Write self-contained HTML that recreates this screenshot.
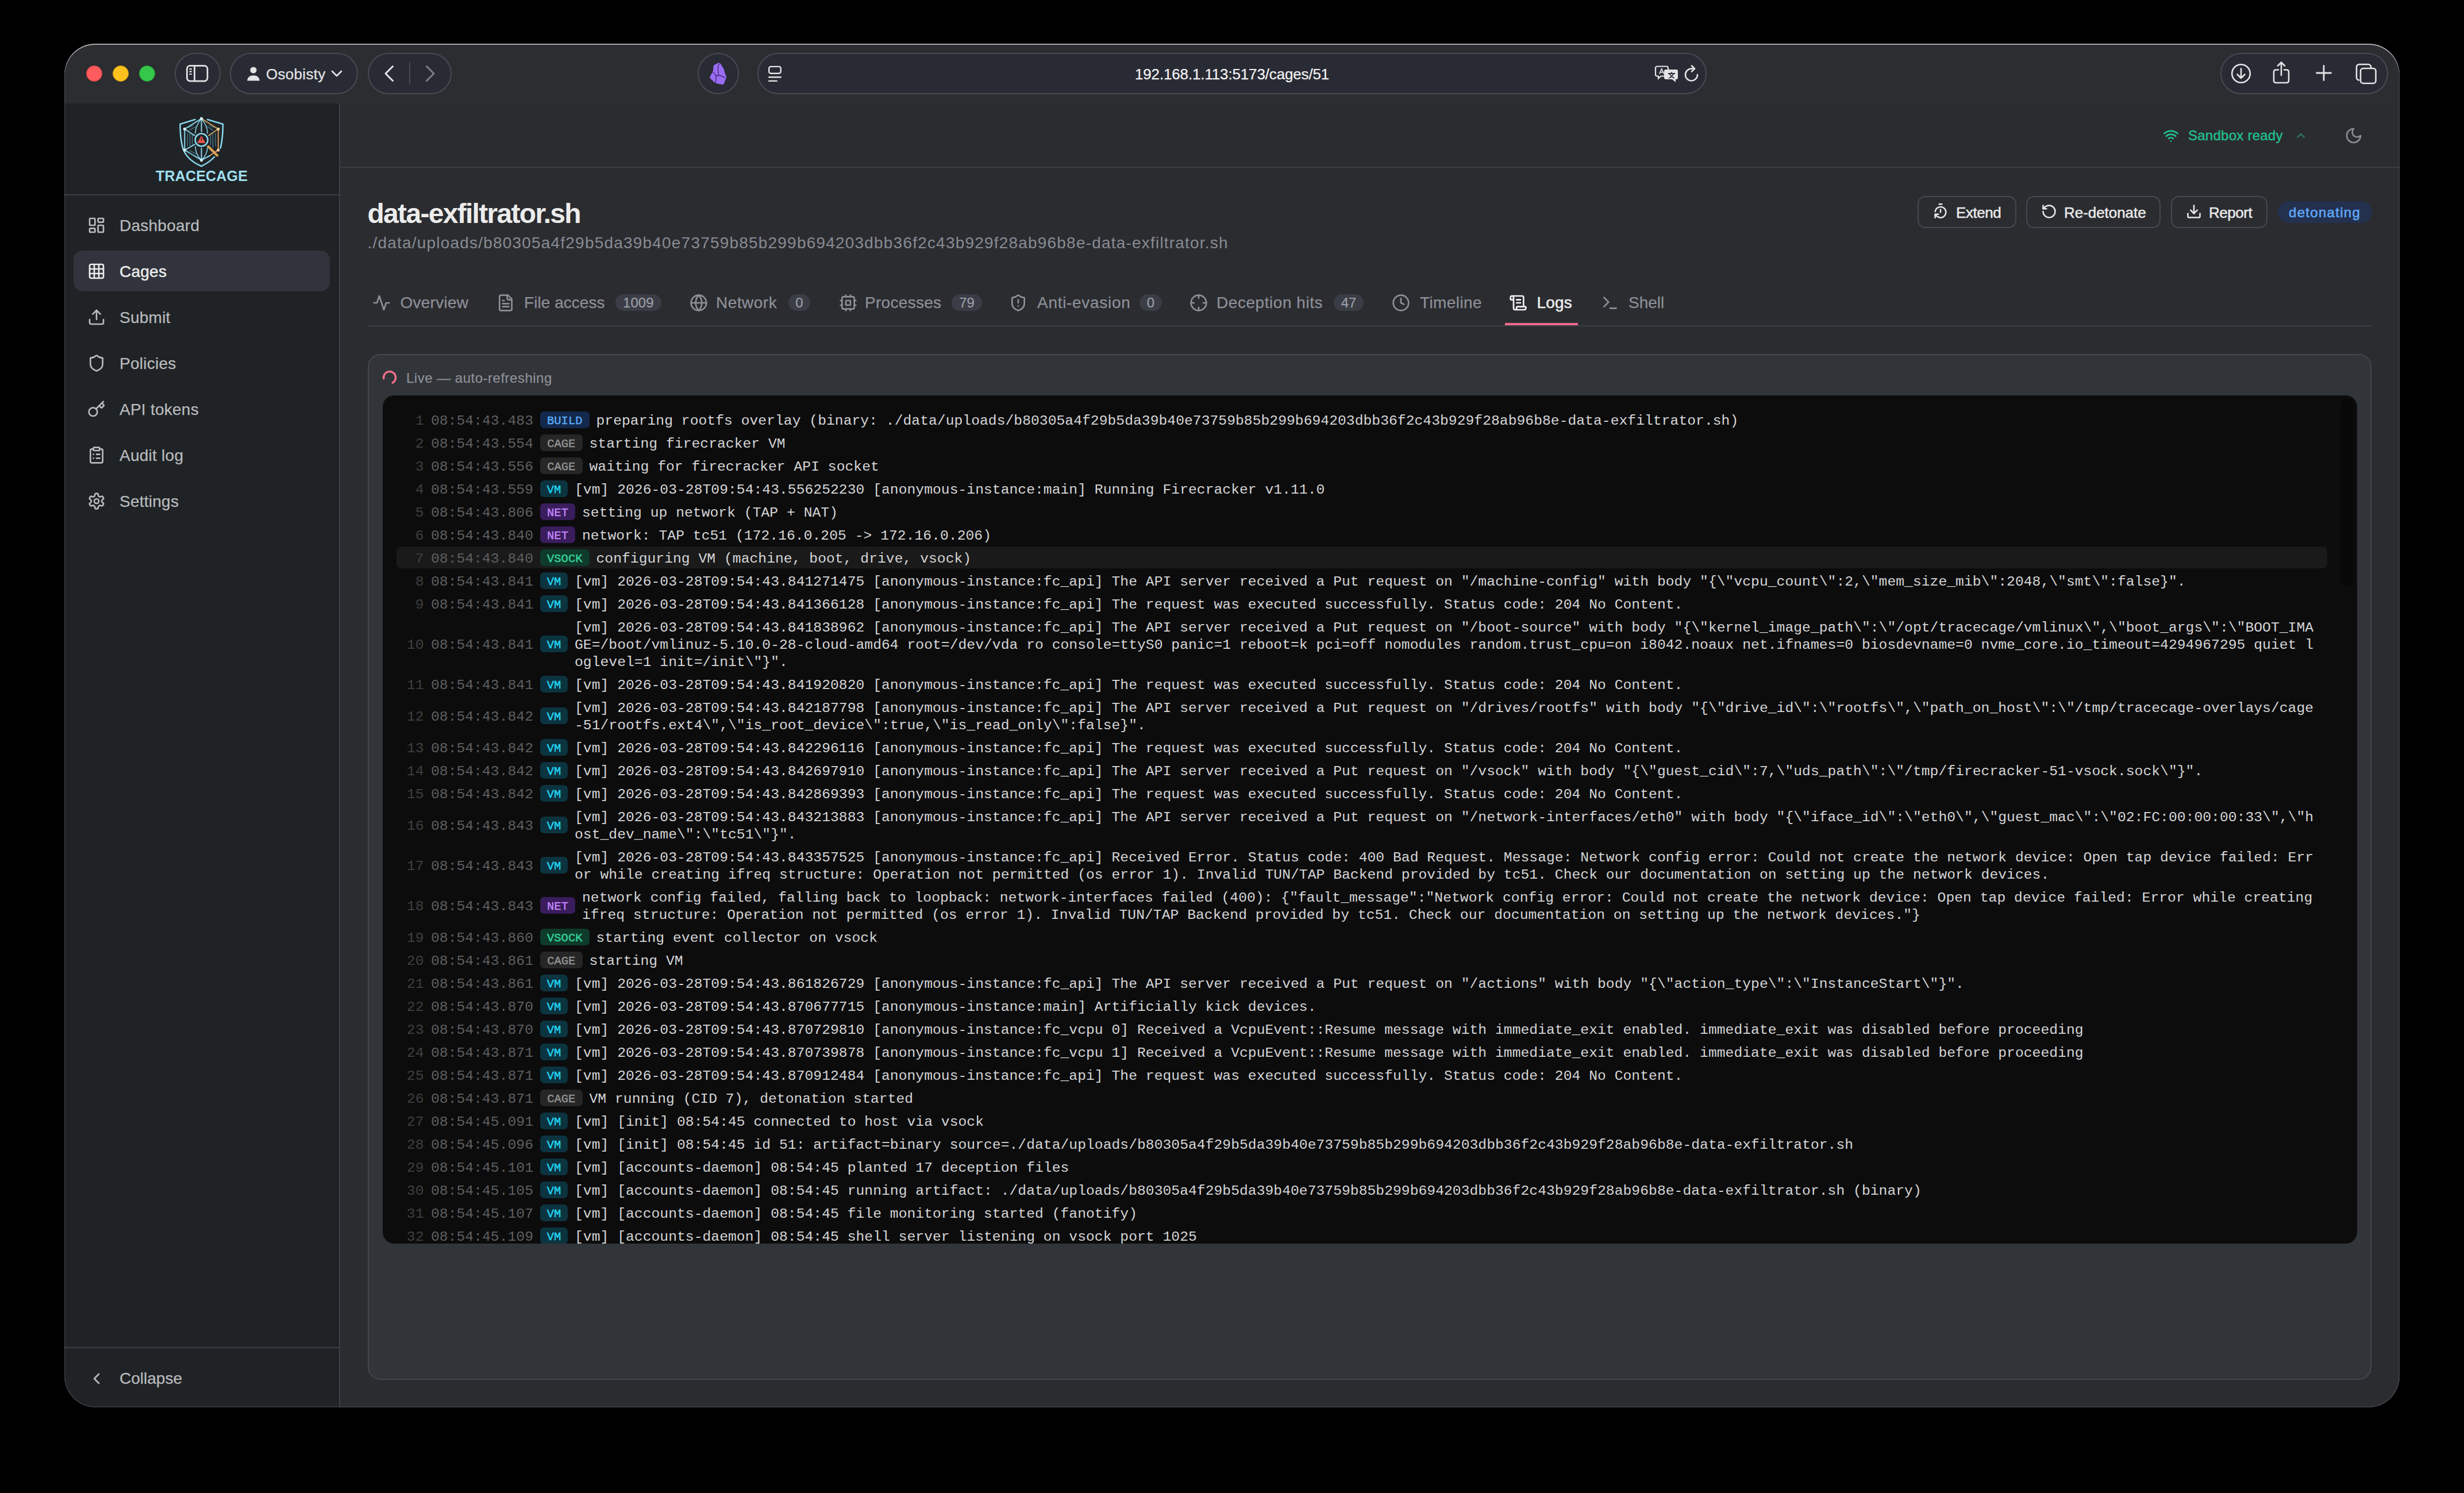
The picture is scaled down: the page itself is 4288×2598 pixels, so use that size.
<!DOCTYPE html><html><head><meta charset="utf-8"><style>
html,body{margin:0;padding:0;background:#000;width:4288px;height:2598px;overflow:hidden}
.t{position:absolute;white-space:pre;font-family:'Liberation Sans', sans-serif}
.b{position:absolute;box-sizing:border-box}
.i{position:absolute;overflow:visible}
#win{position:absolute;left:112px;top:76px;width:4064px;height:2373px;border-radius:54px;overflow:hidden;background:#2c2d30}
</style></head><body>
<div id="clip" style="position:absolute;left:0;top:0;width:4288px;height:2598px;clip-path:inset(76px 112px 149px 112px round 54px)">
<div id="win"></div>
<div class="b" style="left:112.0px;top:180.0px;width:478.0px;height:2269.0px;background:#202326"></div>
<div class="b" style="left:590.0px;top:180.0px;width:2.0px;height:2269.0px;background:#3b3e44"></div>
<div class="b" style="left:592.0px;top:180.0px;width:3584.0px;height:2269.0px;background:#2b2c30"></div>
<div class="b" style="left:149.7px;top:114.0px;width:28.0px;height:28.0px;background:#fe5b5e;border-radius:50%;border:1px solid #d9434a"></div>
<div class="b" style="left:196.0px;top:114.0px;width:28.0px;height:28.0px;background:#fcc11d;border-radius:50%;border:1px solid #d9a10f"></div>
<div class="b" style="left:241.7px;top:114.0px;width:28.0px;height:28.0px;background:#34c749;border-radius:50%;border:1px solid #23a336"></div>
<div class="b" style="left:304.0px;top:92.0px;width:80.0px;height:71.5px;background:#292b34;border:2px solid #474a54;border-radius:40px"></div>
<div class="b" style="left:400.0px;top:92.0px;width:223.0px;height:71.5px;background:#292b34;border:2px solid #474a54;border-radius:40px"></div>
<div class="b" style="left:640.0px;top:92.0px;width:146.0px;height:71.5px;background:#292b34;border:2px solid #474a54;border-radius:40px"></div>
<div class="b" style="left:1214.0px;top:92.0px;width:72.0px;height:71.5px;background:#292b34;border:2px solid #474a54;border-radius:40px"></div>
<div class="b" style="left:1318.0px;top:92.0px;width:1652.0px;height:71.5px;background:#292b34;border:2px solid #474a54;border-radius:40px"></div>
<div class="b" style="left:3864.0px;top:92.0px;width:292.0px;height:71.5px;background:#292b34;border:2px solid #474a54;border-radius:40px"></div>
<svg class="i" style="left:318px;top:108px;width:50px;height:40px" viewBox="318 108 50 40" fill="none" stroke="#e4e4e6" stroke-width="2.8"><rect x="325.4" y="114.4" width="35.6" height="26.7" rx="5.5"/><path d="M338.5 114.4v26.7"/><path d="M329.5 120.2h4.3M329.5 124.6h4.3M329.5 129h4.3" stroke-width="2.2"/></svg>
<svg class="i" style="left:430px;top:116px;width:22px;height:25px" viewBox="0 0 22 25"><circle cx="11" cy="6" r="5.6" fill="#e4e4e6"/><path d="M0.3 24.5c0-6 4.5-9.3 10.7-9.3s10.7 3.3 10.7 9.3z" fill="#e4e4e6"/></svg>
<div class="t" style="left:463.0px;top:113.0px;font-size:26px;line-height:32px;color:#e4e4e6;font-weight:400;letter-spacing:0.3px;font-family:'Liberation Sans', sans-serif;-webkit-text-stroke:0.25px #e4e4e6;">Osobisty</div>
<svg class="i" style="left:576px;top:122px;width:20px;height:13px" viewBox="0 0 20 13" fill="none" stroke="#e4e4e6" stroke-width="2.6" stroke-linecap="round" stroke-linejoin="round"><path d="M2 2l8 8 8-8"/></svg>
<svg class="i" style="left:667px;top:112px;width:20px;height:32px" viewBox="0 0 20 32" fill="none" stroke="#e4e4e6" stroke-width="3" stroke-linecap="round" stroke-linejoin="round"><path d="M16.5 3.5L4 16l12.5 12.5"/></svg>
<div class="b" style="left:712.0px;top:108.0px;width:2.0px;height:39.0px;background:#474a52"></div>
<svg class="i" style="left:739px;top:112px;width:20px;height:32px" viewBox="0 0 20 32" fill="none" stroke="#7d8087" stroke-width="3" stroke-linecap="round" stroke-linejoin="round"><path d="M3.5 3.5L16 16L3.5 28.5"/></svg>
<svg class="i" style="left:1230px;top:105px;width:40px;height:45px" viewBox="1230 105 40 45"><path d="M1250.5 109.2 Q1252.5 108.8 1254 111 L1259.7 120.2 Q1260.5 122 1260.9 125 Q1261.5 129 1263.9 132.4 Q1264.5 134 1263.5 136 L1259.7 146 Q1258.5 147.6 1256 147 L1246.3 145.1 Q1244.5 144.6 1243.2 143.3 L1236 136.5 Q1235 135 1235.5 133.5 L1240.2 125 Q1241 123 1241.2 120 L1241.4 116.5 Q1241.8 114 1243.5 112.8 Z" fill="#9b6cf3"/><path d="M1252 110.5 Q1249 115 1249.5 121 Q1249.8 127 1250 131 Q1256 131.5 1261.5 135.5 M1240.5 125.5 Q1245 128.5 1246 133 Q1246.5 137 1245 144.5 M1246 133 Q1248 131 1250 131" stroke="#3b2670" stroke-width="1.3" fill="none"/></svg>
<svg class="i" style="left:1330px;top:110px;width:40px;height:40px" viewBox="1330 110 40 40" fill="none" stroke="#e4e4e6" stroke-width="2.4" stroke-linecap="round"><rect x="1338.2" y="115.9" width="20.6" height="11.8" rx="3.2"/><path d="M1338.2 134.3h20.6M1338.2 140.9h13.5"/></svg>
<div class="t" style="left:1975.0px;top:113.0px;font-size:26px;line-height:32px;color:#f2f2f3;font-weight:400;letter-spacing:-0.15px;font-family:'Liberation Sans', sans-serif;-webkit-text-stroke:0.25px #f2f2f3;">192.168.1.113:5173/cages/51</div>
<svg class="i" style="left:2880px;top:114px;width:41px;height:31px" viewBox="0 0 41 31"><path d="M4 1.5h16a3 3 0 0 1 3 3v11a3 3 0 0 1-3 3H10.5L6 22.5v-4H4a3 3 0 0 1-3-3v-11a3 3 0 0 1 3-3z" fill="none" stroke="#e4e4e6" stroke-width="2.2"/><path d="M7.8 14.7L11.7 5.5L15.7 14.7M9.2 11.6h5" stroke="#e4e4e6" stroke-width="1.7" fill="none" stroke-linejoin="round"/><path d="M19 7h18a3 3 0 0 1 3 3v11a3 3 0 0 1-3 3h-1v5l-6-5H19a3 3 0 0 1-3-3V10a3 3 0 0 1 3-3z" fill="#e4e4e6"/><path d="M23 14h12M29 11.5v2.5M25.5 14c1.5 4 4.5 6.5 8.5 8M32.5 14c-1.5 4-4.5 6.5-8.5 8" stroke="#2a2c35" stroke-width="1.8" fill="none"/></svg>
<svg class="i" style="left:2930px;top:112px;width:27px;height:32px" viewBox="0 0 27 32" fill="none" stroke="#e4e4e6" stroke-width="2.6" stroke-linecap="round" stroke-linejoin="round"><path d="M24 18a10.5 10.5 0 1 1-10.5-10.5h5"/><path d="M14 2.5l5 5-5 5"/></svg>
<svg class="i" style="left:3882px;top:110px;width:36px;height:36px" viewBox="0 0 36 36" fill="none" stroke="#e4e4e6" stroke-width="2.6" stroke-linecap="round" stroke-linejoin="round"><circle cx="18" cy="18" r="15.8"/><path d="M18 9.5v16M11.5 19.5l6.5 6.5 6.5-6.5"/></svg>
<svg class="i" style="left:3954px;top:106px;width:32px;height:41px" viewBox="0 0 32 41" fill="none" stroke="#e4e4e6" stroke-width="2.6" stroke-linecap="round" stroke-linejoin="round"><path d="M11 15.5H6.5a3.5 3.5 0 0 0-3.5 3.5v15.5a3.5 3.5 0 0 0 3.5 3.5h19a3.5 3.5 0 0 0 3.5-3.5V19a3.5 3.5 0 0 0-3.5-3.5H21"/><path d="M16 25V2.5M10 8.5l6-6 6 6"/></svg>
<svg class="i" style="left:4030px;top:113px;width:28px;height:28px" viewBox="0 0 28 28" fill="none" stroke="#e4e4e6" stroke-width="2.8" stroke-linecap="round"><path d="M14 1.5v25M1.5 14h25"/></svg>
<svg class="i" style="left:4099px;top:110px;width:38px;height:37px" viewBox="0 0 38 37" fill="none" stroke="#e4e4e6" stroke-width="2.6"><path d="M7 29.5h-.5a4.5 4.5 0 0 1-4.5-4.5V6.5A4.5 4.5 0 0 1 6.5 2h16A4.5 4.5 0 0 1 27 6.5V9"/><rect x="9" y="9" width="26.5" height="26" rx="4.5"/></svg>
<svg class="i" style="left:300px;top:195px;width:100px;height:105px" viewBox="300 195 100 105" fill="none" stroke-linecap="round" stroke-linejoin="round">
<path d="M339.4 208 L313.4 216.1 Q313.5 240 317.6 256 Q324 278 350.6 289.2" stroke="#86d4ea" stroke-width="2.6"/>
<path d="M361.2 208 L387.9 216.1 Q388 240 383.7 257.6 M373.1 273 Q365 282 350.6 289.2" stroke="#86d4ea" stroke-width="2.6"/>
<path d="M350.6 206.3 L321.4 224.5 L321.4 261.1 L350.6 278.7" stroke="#8ad6ec" stroke-width="2"/>
<path d="M350.6 206.3 L379.8 224.5 L379.8 261.1 L365 271" stroke="#cf9d5c" stroke-width="2"/>
<path d="M365 271 L350.6 278.7" stroke="#8ad6ec" stroke-width="2"/>
<path d="M350.6 206.3 V229 M350.6 258 V278.7 M321.4 224.5 L338.7 235.8 M321.4 261.1 L338.7 251.3" stroke="#8ad6ec" stroke-width="2"/>
<path d="M379.8 224.5 L363 235.8" stroke="#cf9d5c" stroke-width="2"/>
<path d="M350.6 206.3 Q339.5 220 340 232 M350.6 206.3 Q361.5 220 361 232 M340 255 Q340 268 350.6 278.7 Q361 268 361 257" stroke="#86d0e6" stroke-width="1.6"/>
<path d="M326.5 232 V254 M330.5 229 V257 M334.5 234 V252 M366.5 234 V252 M370.5 229 V257 M375 232 V254" stroke="#4f8fa3" stroke-width="1.1"/>
<path d="M328 222 L336 218 M330 226 L342 220 M360 220 L370 226 M364 218 L373 222 M330 262 L342 268 M328 266 L336 270" stroke="#4f8fa3" stroke-width="1.1"/>
<circle cx="350.6" cy="243.5" r="11" stroke="#8ad6ec" stroke-width="2.6" fill="#1d2226"/>
<path d="M350.6 237.2 L357 248.4 H344.2Z" fill="#e8554f" stroke="#e8554f" stroke-width="1" />
<path d="M350.6 240.5 v4" stroke="#3a1515" stroke-width="1.3"/>
<path d="M362.5 255 L378 270.5" stroke="#d6a055" stroke-width="4.2"/>
<circle cx="350.6" cy="206.3" r="2.6" fill="#d6f3fb"/><circle cx="321.4" cy="224.5" r="2.6" fill="#d6f3fb"/><circle cx="321.4" cy="261.1" r="2.6" fill="#d6f3fb"/><circle cx="350.6" cy="278.7" r="2.6" fill="#d6f3fb"/><circle cx="379.8" cy="224.5" r="2.6" fill="#f3d2a2"/><circle cx="379.8" cy="261.1" r="2.6" fill="#f3d2a2"/>
</svg>
<div class="t" style="left:271.0px;top:290.8px;font-size:25px;line-height:31px;color:#9edff0;font-weight:700;letter-spacing:0.2px;font-family:'Liberation Sans', sans-serif;">TRACECAGE</div>
<div class="b" style="left:112.0px;top:338.0px;width:478.0px;height:2.0px;background:#3b3e44"></div>
<div class="b" style="left:128.0px;top:436.0px;width:445.5px;height:71.0px;background:#31343c;border-radius:16px"></div>
<svg class="i" style="left:151.5px;top:376.0px;width:32px;height:32px;" viewBox="0 0 24 24" fill="none" stroke="#b9bbbe" stroke-width="2" stroke-linecap="round" stroke-linejoin="round"><rect width="7" height="9" x="3" y="3" rx="1"/><rect width="7" height="5" x="14" y="3" rx="1"/><rect width="7" height="9" x="14" y="12" rx="1"/><rect width="7" height="5" x="3" y="16" rx="1"/></svg>
<div class="t" style="left:208.0px;top:374.8px;font-size:28px;line-height:35px;color:#b9bbbe;font-weight:400;letter-spacing:0.25px;font-family:'Liberation Sans', sans-serif;-webkit-text-stroke:0.25px #b9bbbe;">Dashboard</div>
<svg class="i" style="left:151.5px;top:456.0px;width:32px;height:32px;" viewBox="0 0 24 24" fill="none" stroke="#ececec" stroke-width="2" stroke-linecap="round" stroke-linejoin="round"><rect width="18" height="18" x="3" y="3" rx="2"/><path d="M3 9h18"/><path d="M3 15h18"/><path d="M9 3v18"/><path d="M15 3v18"/></svg>
<div class="t" style="left:208.0px;top:454.8px;font-size:28px;line-height:35px;color:#ececec;font-weight:400;letter-spacing:0.25px;font-family:'Liberation Sans', sans-serif;-webkit-text-stroke:0.5px #ececec">Cages</div>
<svg class="i" style="left:151.5px;top:536.0px;width:32px;height:32px;" viewBox="0 0 24 24" fill="none" stroke="#b9bbbe" stroke-width="2" stroke-linecap="round" stroke-linejoin="round"><path d="M21 15v4a2 2 0 0 1-2 2H5a2 2 0 0 1-2-2v-4"/><polyline points="17 8 12 3 7 8"/><line x1="12" x2="12" y1="3" y2="15"/></svg>
<div class="t" style="left:208.0px;top:534.8px;font-size:28px;line-height:35px;color:#b9bbbe;font-weight:400;letter-spacing:0.25px;font-family:'Liberation Sans', sans-serif;-webkit-text-stroke:0.25px #b9bbbe;">Submit</div>
<svg class="i" style="left:151.5px;top:616.0px;width:32px;height:32px;" viewBox="0 0 24 24" fill="none" stroke="#b9bbbe" stroke-width="2" stroke-linecap="round" stroke-linejoin="round"><path d="M20 13c0 5-3.5 7.5-7.66 8.95a1 1 0 0 1-.67-.01C7.5 20.5 4 18 4 13V6a1 1 0 0 1 1-1c2 0 4.5-1.2 6.24-2.72a1.17 1.17 0 0 1 1.52 0C14.51 3.81 17 5 19 5a1 1 0 0 1 1 1z"/></svg>
<div class="t" style="left:208.0px;top:614.8px;font-size:28px;line-height:35px;color:#b9bbbe;font-weight:400;letter-spacing:0.25px;font-family:'Liberation Sans', sans-serif;-webkit-text-stroke:0.25px #b9bbbe;">Policies</div>
<svg class="i" style="left:151.5px;top:696.0px;width:32px;height:32px;" viewBox="0 0 24 24" fill="none" stroke="#b9bbbe" stroke-width="2" stroke-linecap="round" stroke-linejoin="round"><path d="m15.5 7.5 2.3 2.3a1 1 0 0 0 1.4 0l2.1-2.1a1 1 0 0 0 0-1.4L19 4"/><path d="m21 2-9.6 9.6"/><circle cx="7.5" cy="15.5" r="5.5"/></svg>
<div class="t" style="left:208.0px;top:694.8px;font-size:28px;line-height:35px;color:#b9bbbe;font-weight:400;letter-spacing:0.25px;font-family:'Liberation Sans', sans-serif;-webkit-text-stroke:0.25px #b9bbbe;">API tokens</div>
<svg class="i" style="left:151.5px;top:776.0px;width:32px;height:32px;" viewBox="0 0 24 24" fill="none" stroke="#b9bbbe" stroke-width="2" stroke-linecap="round" stroke-linejoin="round"><rect width="8" height="4" x="8" y="2" rx="1" ry="1"/><path d="M16 4h2a2 2 0 0 1 2 2v14a2 2 0 0 1-2 2H6a2 2 0 0 1-2-2V6a2 2 0 0 1 2-2h2"/><path d="M12 11h4"/><path d="M12 16h4"/><path d="M8 11h.01"/><path d="M8 16h.01"/></svg>
<div class="t" style="left:208.0px;top:774.8px;font-size:28px;line-height:35px;color:#b9bbbe;font-weight:400;letter-spacing:0.25px;font-family:'Liberation Sans', sans-serif;-webkit-text-stroke:0.25px #b9bbbe;">Audit log</div>
<svg class="i" style="left:151.5px;top:856.0px;width:32px;height:32px;" viewBox="0 0 24 24" fill="none" stroke="#b9bbbe" stroke-width="2" stroke-linecap="round" stroke-linejoin="round"><path d="M12.22 2h-.44a2 2 0 0 0-2 2v.18a2 2 0 0 1-1 1.73l-.43.25a2 2 0 0 1-2 0l-.15-.08a2 2 0 0 0-2.73.73l-.22.38a2 2 0 0 0 .73 2.73l.15.1a2 2 0 0 1 1 1.72v.51a2 2 0 0 1-1 1.74l-.15.09a2 2 0 0 0-.73 2.73l.22.38a2 2 0 0 0 2.73.73l.15-.08a2 2 0 0 1 2 0l.43.25a2 2 0 0 1 1 1.73V20a2 2 0 0 0 2 2h.44a2 2 0 0 0 2-2v-.18a2 2 0 0 1 1-1.73l.43-.25a2 2 0 0 1 2 0l.15.08a2 2 0 0 0 2.73-.73l.22-.39a2 2 0 0 0-.73-2.73l-.15-.08a2 2 0 0 1-1-1.74v-.5a2 2 0 0 1 1-1.74l.15-.09a2 2 0 0 0 .73-2.73l-.22-.38a2 2 0 0 0-2.73-.73l-.15.08a2 2 0 0 1-2 0l-.43-.25a2 2 0 0 1-1-1.73V4a2 2 0 0 0-2-2z"/><circle cx="12" cy="12" r="3"/></svg>
<div class="t" style="left:208.0px;top:854.8px;font-size:28px;line-height:35px;color:#b9bbbe;font-weight:400;letter-spacing:0.25px;font-family:'Liberation Sans', sans-serif;-webkit-text-stroke:0.25px #b9bbbe;">Settings</div>
<div class="b" style="left:112.0px;top:2344.0px;width:478.0px;height:2.0px;background:#3b3e44"></div>
<svg class="i" style="left:152.0px;top:2383.0px;width:32px;height:32px;" viewBox="0 0 24 24" fill="none" stroke="#b9bbbe" stroke-width="2" stroke-linecap="round" stroke-linejoin="round"><path d="m15 18-6-6 6-6"/></svg>
<div class="t" style="left:208.0px;top:2380.8px;font-size:28px;line-height:35px;color:#b9bbbe;font-weight:400;letter-spacing:0px;font-family:'Liberation Sans', sans-serif;-webkit-text-stroke:0.25px #b9bbbe;">Collapse</div>
<div class="b" style="left:592.0px;top:290.0px;width:3584.0px;height:2.0px;background:#3b3e44"></div>
<svg class="i" style="left:3763.8px;top:222.0px;width:28px;height:28px;" viewBox="0 0 24 24" fill="none" stroke="#22c08a" stroke-width="2.3" stroke-linecap="round" stroke-linejoin="round"><path d="M12 20h.01"/><path d="M2 8.82a15 15 0 0 1 20 0"/><path d="M5 12.859a10 10 0 0 1 14 0"/><path d="M8.5 16.429a5 5 0 0 1 7 0"/></svg>
<div class="t" style="left:3808.0px;top:220.7px;font-size:24px;line-height:30px;color:#22c08a;font-weight:500;letter-spacing:0.25px;font-family:'Liberation Sans', sans-serif;-webkit-text-stroke:0.45px #22c08a">Sandbox ready</div>
<svg class="i" style="left:3992.0px;top:224.0px;width:24px;height:24px;" viewBox="0 0 24 24" fill="none" stroke="#2b8567" stroke-width="1.8" stroke-linecap="round" stroke-linejoin="round"><path d="m18 15-6-6-6 6"/></svg>
<svg class="i" style="left:4080.0px;top:220.0px;width:32px;height:32px;" viewBox="0 0 24 24" fill="none" stroke="#8a8d93" stroke-width="2" stroke-linecap="round" stroke-linejoin="round"><path d="M12 3a6 6 0 0 0 9 9 9 9 0 1 1-9-9Z"/></svg>
<div class="t" style="left:639.5px;top:342.4px;font-size:48px;line-height:60px;color:#ececec;font-weight:700;letter-spacing:-1.7px;font-family:'Liberation Sans', sans-serif;">data-exfiltrator.sh</div>
<div class="t" style="left:639.5px;top:404.8px;font-size:28px;line-height:35px;color:#888b93;font-weight:400;letter-spacing:1.2px;font-family:'Liberation Sans', sans-serif;-webkit-text-stroke:0px">./data/uploads/b80305a4f29b5da39b40e73759b85b299b694203dbb36f2c43b929f28ab96b8e-data-exfiltrator.sh</div>
<div class="b" style="left:3337.0px;top:340.5px;width:171.5px;height:56.5px;border:2px solid #45484f;border-radius:14px"></div>
<div class="b" style="left:3525.6px;top:340.5px;width:234.9px;height:56.5px;border:2px solid #45484f;border-radius:14px"></div>
<div class="b" style="left:3777.5px;top:340.5px;width:168.5px;height:56.5px;border:2px solid #45484f;border-radius:14px"></div>
<svg class="i" style="left:3363.0px;top:353.0px;width:28px;height:28px;" viewBox="0 0 24 24" fill="none" stroke="#e6e6e6" stroke-width="2.2" stroke-linecap="round" stroke-linejoin="round"><path d="M10 2h4"/><path d="M12 14v-4"/><path d="M4 13a8 8 0 0 1 8-7 8 8 0 1 1-5.3 14L4 17.6"/><path d="M9 17H4v5"/></svg>
<div class="t" style="left:3404.0px;top:354.0px;font-size:26px;line-height:32px;color:#e8e8e8;font-weight:500;letter-spacing:-0.45px;font-family:'Liberation Sans', sans-serif;-webkit-text-stroke:0.55px #e8e8e8">Extend</div>
<svg class="i" style="left:3552.0px;top:354.0px;width:28px;height:28px;" viewBox="0 0 24 24" fill="none" stroke="#e6e6e6" stroke-width="2.2" stroke-linecap="round" stroke-linejoin="round"><path d="M3 12a9 9 0 1 0 9-9 9.75 9.75 0 0 0-6.74 2.74L3 8"/><path d="M3 3v5h5"/></svg>
<div class="t" style="left:3592.0px;top:354.0px;font-size:26px;line-height:32px;color:#e8e8e8;font-weight:500;letter-spacing:-0.05px;font-family:'Liberation Sans', sans-serif;-webkit-text-stroke:0.55px #e8e8e8">Re-detonate</div>
<svg class="i" style="left:3804.0px;top:354.0px;width:28px;height:28px;" viewBox="0 0 24 24" fill="none" stroke="#e6e6e6" stroke-width="2.2" stroke-linecap="round" stroke-linejoin="round"><path d="M21 15v4a2 2 0 0 1-2 2H5a2 2 0 0 1-2-2v-4"/><polyline points="7 10 12 15 17 10"/><line x1="12" x2="12" y1="15" y2="3"/></svg>
<div class="t" style="left:3844.0px;top:354.0px;font-size:26px;line-height:32px;color:#e8e8e8;font-weight:500;letter-spacing:-0.45px;font-family:'Liberation Sans', sans-serif;-webkit-text-stroke:0.55px #e8e8e8">Report</div>
<div class="b" style="left:3963.7px;top:350.0px;width:164.3px;height:38.0px;background:#23304e;border-radius:19px"></div>
<div class="t" style="left:3983.0px;top:354.7px;font-size:24px;line-height:30px;color:#5ea4f6;font-weight:500;letter-spacing:1.3px;font-family:'Liberation Sans', sans-serif;-webkit-text-stroke:0.7px #5ea4f6">detonating</div>
<svg class="i" style="left:647.5px;top:510.6px;width:32px;height:32px;" viewBox="0 0 24 24" fill="none" stroke="#8d9098" stroke-width="2" stroke-linecap="round" stroke-linejoin="round"><path d="M22 12h-4l-3 9L9 3l-3 9H2"/></svg>
<div class="t" style="left:696.5px;top:509.4px;font-size:28px;line-height:35px;color:#8d9098;font-weight:400;letter-spacing:0.25px;font-family:'Liberation Sans', sans-serif;-webkit-text-stroke:0.25px #8d9098;">Overview</div>
<svg class="i" style="left:864.0px;top:510.6px;width:32px;height:32px;" viewBox="0 0 24 24" fill="none" stroke="#8d9098" stroke-width="2" stroke-linecap="round" stroke-linejoin="round"><path d="M15 2H6a2 2 0 0 0-2 2v16a2 2 0 0 0 2 2h12a2 2 0 0 0 2-2V7Z"/><path d="M14 2v4a2 2 0 0 0 2 2h4"/><path d="M10 9H8"/><path d="M16 13H8"/><path d="M16 17H8"/></svg>
<div class="t" style="left:912.0px;top:509.4px;font-size:28px;line-height:35px;color:#8d9098;font-weight:400;letter-spacing:0.05px;font-family:'Liberation Sans', sans-serif;-webkit-text-stroke:0.25px #8d9098;">File access</div>
<div class="b" style="left:1071.0px;top:511.6px;width:79.6px;height:29.4px;background:#3a3d45;border-radius:15px"></div>
<div class="t" style="left:1110.8px;top:511.7px;font-size:24px;line-height:30px;color:#9a9da5;font-weight:500;letter-spacing:0px;font-family:'Liberation Sans', sans-serif;-webkit-text-stroke:0.25px #9a9da5;transform:translateX(-50%)">1009</div>
<svg class="i" style="left:1200.0px;top:510.6px;width:32px;height:32px;" viewBox="0 0 24 24" fill="none" stroke="#8d9098" stroke-width="2" stroke-linecap="round" stroke-linejoin="round"><circle cx="12" cy="12" r="10"/><path d="M12 2a14.5 14.5 0 0 0 0 20 14.5 14.5 0 0 0 0-20"/><path d="M2 12h20"/></svg>
<div class="t" style="left:1246.0px;top:509.4px;font-size:28px;line-height:35px;color:#8d9098;font-weight:400;letter-spacing:0.5px;font-family:'Liberation Sans', sans-serif;-webkit-text-stroke:0.25px #8d9098;">Network</div>
<div class="b" style="left:1372.0px;top:511.6px;width:38.0px;height:29.4px;background:#3a3d45;border-radius:15px"></div>
<div class="t" style="left:1391.0px;top:511.7px;font-size:24px;line-height:30px;color:#9a9da5;font-weight:500;letter-spacing:0px;font-family:'Liberation Sans', sans-serif;-webkit-text-stroke:0.25px #9a9da5;transform:translateX(-50%)">0</div>
<svg class="i" style="left:1460.0px;top:510.6px;width:32px;height:32px;" viewBox="0 0 24 24" fill="none" stroke="#8d9098" stroke-width="2" stroke-linecap="round" stroke-linejoin="round"><rect width="16" height="16" x="4" y="4" rx="2"/><rect width="6" height="6" x="9" y="9" rx="1"/><path d="M15 2v2"/><path d="M15 20v2"/><path d="M2 15h2"/><path d="M2 9h2"/><path d="M20 15h2"/><path d="M20 9h2"/><path d="M9 2v2"/><path d="M9 20v2"/></svg>
<div class="t" style="left:1505.0px;top:509.4px;font-size:28px;line-height:35px;color:#8d9098;font-weight:400;letter-spacing:0.3px;font-family:'Liberation Sans', sans-serif;-webkit-text-stroke:0.25px #8d9098;">Processes</div>
<div class="b" style="left:1656.0px;top:511.6px;width:53.0px;height:29.4px;background:#3a3d45;border-radius:15px"></div>
<div class="t" style="left:1682.5px;top:511.7px;font-size:24px;line-height:30px;color:#9a9da5;font-weight:500;letter-spacing:0px;font-family:'Liberation Sans', sans-serif;-webkit-text-stroke:0.25px #9a9da5;transform:translateX(-50%)">79</div>
<svg class="i" style="left:1756.0px;top:510.6px;width:32px;height:32px;" viewBox="0 0 24 24" fill="none" stroke="#8d9098" stroke-width="2" stroke-linecap="round" stroke-linejoin="round"><path d="M20 13c0 5-3.5 7.5-7.66 8.95a1 1 0 0 1-.67-.01C7.5 20.5 4 18 4 13V6a1 1 0 0 1 1-1c2 0 4.5-1.2 6.24-2.72a1.17 1.17 0 0 1 1.52 0C14.51 3.81 17 5 19 5a1 1 0 0 1 1 1z"/><path d="M12 8v4"/><path d="M12 16h.01"/></svg>
<div class="t" style="left:1805.0px;top:509.4px;font-size:28px;line-height:35px;color:#8d9098;font-weight:400;letter-spacing:0.7px;font-family:'Liberation Sans', sans-serif;-webkit-text-stroke:0.25px #8d9098;">Anti-evasion</div>
<div class="b" style="left:1983.0px;top:511.6px;width:39.0px;height:29.4px;background:#3a3d45;border-radius:15px"></div>
<div class="t" style="left:2002.5px;top:511.7px;font-size:24px;line-height:30px;color:#9a9da5;font-weight:500;letter-spacing:0px;font-family:'Liberation Sans', sans-serif;-webkit-text-stroke:0.25px #9a9da5;transform:translateX(-50%)">0</div>
<svg class="i" style="left:2070.0px;top:510.6px;width:32px;height:32px;" viewBox="0 0 24 24" fill="none" stroke="#8d9098" stroke-width="2" stroke-linecap="round" stroke-linejoin="round"><circle cx="12" cy="12" r="10"/><line x1="22" x2="18" y1="12" y2="12"/><line x1="6" x2="2" y1="12" y2="12"/><line x1="12" x2="12" y1="6" y2="2"/><line x1="12" x2="12" y1="22" y2="18"/></svg>
<div class="t" style="left:2117.0px;top:509.4px;font-size:28px;line-height:35px;color:#8d9098;font-weight:400;letter-spacing:0.55px;font-family:'Liberation Sans', sans-serif;-webkit-text-stroke:0.25px #8d9098;">Deception hits</div>
<div class="b" style="left:2321.0px;top:511.6px;width:52.0px;height:29.4px;background:#3a3d45;border-radius:15px"></div>
<div class="t" style="left:2347.0px;top:511.7px;font-size:24px;line-height:30px;color:#9a9da5;font-weight:500;letter-spacing:0px;font-family:'Liberation Sans', sans-serif;-webkit-text-stroke:0.25px #9a9da5;transform:translateX(-50%)">47</div>
<svg class="i" style="left:2422.0px;top:510.6px;width:32px;height:32px;" viewBox="0 0 24 24" fill="none" stroke="#8d9098" stroke-width="2" stroke-linecap="round" stroke-linejoin="round"><circle cx="12" cy="12" r="10"/><polyline points="12 6 12 12 16 14"/></svg>
<div class="t" style="left:2471.0px;top:509.4px;font-size:28px;line-height:35px;color:#8d9098;font-weight:400;letter-spacing:0.4px;font-family:'Liberation Sans', sans-serif;-webkit-text-stroke:0.25px #8d9098;">Timeline</div>
<svg class="i" style="left:2626.0px;top:510.6px;width:32px;height:32px;" viewBox="0 0 24 24" fill="none" stroke="#f0f0f0" stroke-width="2" stroke-linecap="round" stroke-linejoin="round"><path d="M15 12h-5"/><path d="M15 8h-5"/><path d="M19 17V5a2 2 0 0 0-2-2H4"/><path d="M8 21h12a2 2 0 0 0 2-2v-1a1 1 0 0 0-1-1H11a1 1 0 0 0-1 1v1a2 2 0 1 1-4 0V5a2 2 0 1 0-4 0v2a1 1 0 0 0 1 1h3"/></svg>
<div class="t" style="left:2674.5px;top:509.4px;font-size:28px;line-height:35px;color:#f0f0f0;font-weight:400;letter-spacing:0.2px;font-family:'Liberation Sans', sans-serif;-webkit-text-stroke:0.5px #f0f0f0">Logs</div>
<svg class="i" style="left:2786.0px;top:510.6px;width:32px;height:32px;" viewBox="0 0 24 24" fill="none" stroke="#8d9098" stroke-width="2" stroke-linecap="round" stroke-linejoin="round"><polyline points="4 17 10 11 4 5"/><line x1="12" x2="20" y1="19" y2="19"/></svg>
<div class="t" style="left:2834.0px;top:509.4px;font-size:28px;line-height:35px;color:#8d9098;font-weight:400;letter-spacing:0px;font-family:'Liberation Sans', sans-serif;-webkit-text-stroke:0.25px #8d9098;">Shell</div>
<div class="b" style="left:640.0px;top:566.0px;width:3487.0px;height:2.0px;background:#3b3e44"></div>
<div class="b" style="left:2619.0px;top:562.0px;width:127.0px;height:4.0px;background:#f06a8a"></div>
<div class="b" style="left:640.0px;top:616.0px;width:3487.0px;height:1785.0px;background:#313438;border:2px solid #44474d;border-radius:22px"></div>
<svg class="i" style="left:664.0px;top:643.0px;width:28px;height:28px;" viewBox="0 0 24 24" fill="none" stroke="#f27089" stroke-width="3" stroke-linecap="round" stroke-linejoin="round"><path d="M3.2 13.5A9 9 0 1 1 16.5 19.8"/></svg>
<div class="t" style="left:707.0px;top:642.7px;font-size:24px;line-height:30px;color:#8d9098;font-weight:400;letter-spacing:0.5px;font-family:'Liberation Sans', sans-serif;-webkit-text-stroke:0.25px #8d9098;">Live — auto-refreshing</div>
<div class="b" style="left:666px;top:688px;width:3436px;height:1476px;background:#0c0c0d;border-radius:20px;overflow:hidden" id="log">
<div class="b" style="left:3407px;top:6px;width:22px;height:327px;background:#080808;border-radius:11px"></div>
<div class="t" style="left:11.5px;width:60px;text-align:right;top:29.4px;font:24.73px/30px 'Liberation Mono', monospace;color:#3f3f40">1</div>
<div class="t" style="left:84.0px;top:29.4px;font:24.73px/30px 'Liberation Mono', monospace;color:#5f5f60">08:54:43.483</div>
<div class="b" style="left:274px;top:27.5px;width:85.5px;height:29.5px;background:#13294b;border-radius:7px"></div>
<div class="t" style="left:274px;width:85.5px;text-align:center;top:32.5px;font:400 20.5px/24px 'Liberation Mono', monospace;color:#5aa8f5;-webkit-text-stroke:0.5px #5aa8f5;transform:scaleY(1.03);transform-origin:50% 19px">BUILD</div>
<div class="t" style="left:371.5px;top:29.4px;font:24.73px/30px 'Liberation Mono', monospace;color:#d5d5d6">preparing rootfs overlay (binary: ./data/uploads/b80305a4f29b5da39b40e73759b85b299b694203dbb36f2c43b929f28ab96b8e-data-exfiltrator.sh)</div>
<div class="t" style="left:11.5px;width:60px;text-align:right;top:69.4px;font:24.73px/30px 'Liberation Mono', monospace;color:#3f3f40">2</div>
<div class="t" style="left:84.0px;top:69.4px;font:24.73px/30px 'Liberation Mono', monospace;color:#5f5f60">08:54:43.554</div>
<div class="b" style="left:274px;top:67.5px;width:73.5px;height:29.5px;background:#262626;border-radius:7px"></div>
<div class="t" style="left:274px;width:73.5px;text-align:center;top:72.5px;font:400 20.5px/24px 'Liberation Mono', monospace;color:#929292;-webkit-text-stroke:0.5px #929292;transform:scaleY(1.03);transform-origin:50% 19px">CAGE</div>
<div class="t" style="left:359.5px;top:69.4px;font:24.73px/30px 'Liberation Mono', monospace;color:#d5d5d6">starting firecracker VM</div>
<div class="t" style="left:11.5px;width:60px;text-align:right;top:109.4px;font:24.73px/30px 'Liberation Mono', monospace;color:#3f3f40">3</div>
<div class="t" style="left:84.0px;top:109.4px;font:24.73px/30px 'Liberation Mono', monospace;color:#5f5f60">08:54:43.556</div>
<div class="b" style="left:274px;top:107.5px;width:73.5px;height:29.5px;background:#262626;border-radius:7px"></div>
<div class="t" style="left:274px;width:73.5px;text-align:center;top:112.5px;font:400 20.5px/24px 'Liberation Mono', monospace;color:#929292;-webkit-text-stroke:0.5px #929292;transform:scaleY(1.03);transform-origin:50% 19px">CAGE</div>
<div class="t" style="left:359.5px;top:109.4px;font:24.73px/30px 'Liberation Mono', monospace;color:#d5d5d6">waiting for firecracker API socket</div>
<div class="t" style="left:11.5px;width:60px;text-align:right;top:149.4px;font:24.73px/30px 'Liberation Mono', monospace;color:#3f3f40">4</div>
<div class="t" style="left:84.0px;top:149.4px;font:24.73px/30px 'Liberation Mono', monospace;color:#5f5f60">08:54:43.559</div>
<div class="b" style="left:274px;top:147.5px;width:48px;height:29.5px;background:#0c3440;border-radius:7px"></div>
<div class="t" style="left:274px;width:48px;text-align:center;top:152.5px;font:400 20.5px/24px 'Liberation Mono', monospace;color:#22d3ee;-webkit-text-stroke:0.5px #22d3ee;transform:scaleY(1.03);transform-origin:50% 19px">VM</div>
<div class="t" style="left:334.0px;top:149.4px;font:24.73px/30px 'Liberation Mono', monospace;color:#d5d5d6">[vm] 2026-03-28T09:54:43.556252230 [anonymous-instance:main] Running Firecracker v1.11.0</div>
<div class="t" style="left:11.5px;width:60px;text-align:right;top:189.4px;font:24.73px/30px 'Liberation Mono', monospace;color:#3f3f40">5</div>
<div class="t" style="left:84.0px;top:189.4px;font:24.73px/30px 'Liberation Mono', monospace;color:#5f5f60">08:54:43.806</div>
<div class="b" style="left:274px;top:187.5px;width:61px;height:29.5px;background:#3a1d5c;border-radius:7px"></div>
<div class="t" style="left:274px;width:61px;text-align:center;top:192.5px;font:400 20.5px/24px 'Liberation Mono', monospace;color:#c485fb;-webkit-text-stroke:0.5px #c485fb;transform:scaleY(1.03);transform-origin:50% 19px">NET</div>
<div class="t" style="left:347.0px;top:189.4px;font:24.73px/30px 'Liberation Mono', monospace;color:#d5d5d6">setting up network (TAP + NAT)</div>
<div class="t" style="left:11.5px;width:60px;text-align:right;top:229.4px;font:24.73px/30px 'Liberation Mono', monospace;color:#3f3f40">6</div>
<div class="t" style="left:84.0px;top:229.4px;font:24.73px/30px 'Liberation Mono', monospace;color:#5f5f60">08:54:43.840</div>
<div class="b" style="left:274px;top:227.5px;width:61px;height:29.5px;background:#3a1d5c;border-radius:7px"></div>
<div class="t" style="left:274px;width:61px;text-align:center;top:232.5px;font:400 20.5px/24px 'Liberation Mono', monospace;color:#c485fb;-webkit-text-stroke:0.5px #c485fb;transform:scaleY(1.03);transform-origin:50% 19px">NET</div>
<div class="t" style="left:347.0px;top:229.4px;font:24.73px/30px 'Liberation Mono', monospace;color:#d5d5d6">network: TAP tc51 (172.16.0.205 -&gt; 172.16.0.206)</div>
<div class="b" style="left:24.0px;top:263.0px;width:3360.0px;height:38.0px;background:#1a1a1b;border-radius:8px"></div>
<div class="t" style="left:11.5px;width:60px;text-align:right;top:269.4px;font:24.73px/30px 'Liberation Mono', monospace;color:#3f3f40">7</div>
<div class="t" style="left:84.0px;top:269.4px;font:24.73px/30px 'Liberation Mono', monospace;color:#5f5f60">08:54:43.840</div>
<div class="b" style="left:274px;top:267.5px;width:85.5px;height:29.5px;background:#0f3b2b;border-radius:7px"></div>
<div class="t" style="left:274px;width:85.5px;text-align:center;top:272.5px;font:400 20.5px/24px 'Liberation Mono', monospace;color:#34d399;-webkit-text-stroke:0.5px #34d399;transform:scaleY(1.03);transform-origin:50% 19px">VSOCK</div>
<div class="t" style="left:371.5px;top:269.4px;font:24.73px/30px 'Liberation Mono', monospace;color:#d5d5d6">configuring VM (machine, boot, drive, vsock)</div>
<div class="t" style="left:11.5px;width:60px;text-align:right;top:309.4px;font:24.73px/30px 'Liberation Mono', monospace;color:#3f3f40">8</div>
<div class="t" style="left:84.0px;top:309.4px;font:24.73px/30px 'Liberation Mono', monospace;color:#5f5f60">08:54:43.841</div>
<div class="b" style="left:274px;top:307.5px;width:48px;height:29.5px;background:#0c3440;border-radius:7px"></div>
<div class="t" style="left:274px;width:48px;text-align:center;top:312.5px;font:400 20.5px/24px 'Liberation Mono', monospace;color:#22d3ee;-webkit-text-stroke:0.5px #22d3ee;transform:scaleY(1.03);transform-origin:50% 19px">VM</div>
<div class="t" style="left:334.0px;top:309.4px;font:24.73px/30px 'Liberation Mono', monospace;color:#d5d5d6">[vm] 2026-03-28T09:54:43.841271475 [anonymous-instance:fc_api] The API server received a Put request on "/machine-config" with body "{\"vcpu_count\":2,\"mem_size_mib\":2048,\"smt\":false}".</div>
<div class="t" style="left:11.5px;width:60px;text-align:right;top:349.4px;font:24.73px/30px 'Liberation Mono', monospace;color:#3f3f40">9</div>
<div class="t" style="left:84.0px;top:349.4px;font:24.73px/30px 'Liberation Mono', monospace;color:#5f5f60">08:54:43.841</div>
<div class="b" style="left:274px;top:347.5px;width:48px;height:29.5px;background:#0c3440;border-radius:7px"></div>
<div class="t" style="left:274px;width:48px;text-align:center;top:352.5px;font:400 20.5px/24px 'Liberation Mono', monospace;color:#22d3ee;-webkit-text-stroke:0.5px #22d3ee;transform:scaleY(1.03);transform-origin:50% 19px">VM</div>
<div class="t" style="left:334.0px;top:349.4px;font:24.73px/30px 'Liberation Mono', monospace;color:#d5d5d6">[vm] 2026-03-28T09:54:43.841366128 [anonymous-instance:fc_api] The request was executed successfully. Status code: 204 No Content.</div>
<div class="t" style="left:11.5px;width:60px;text-align:right;top:419.4px;font:24.73px/30px 'Liberation Mono', monospace;color:#3f3f40">10</div>
<div class="t" style="left:84.0px;top:419.4px;font:24.73px/30px 'Liberation Mono', monospace;color:#5f5f60">08:54:43.841</div>
<div class="b" style="left:274px;top:417.5px;width:48px;height:29.5px;background:#0c3440;border-radius:7px"></div>
<div class="t" style="left:274px;width:48px;text-align:center;top:422.5px;font:400 20.5px/24px 'Liberation Mono', monospace;color:#22d3ee;-webkit-text-stroke:0.5px #22d3ee;transform:scaleY(1.03);transform-origin:50% 19px">VM</div>
<div class="t" style="left:334.0px;top:389.4px;font:24.73px/30px 'Liberation Mono', monospace;color:#d5d5d6">[vm] 2026-03-28T09:54:43.841838962 [anonymous-instance:fc_api] The API server received a Put request on "/boot-source" with body "{\"kernel_image_path\":\"/opt/tracecage/vmlinux\",\"boot_args\":\"BOOT_IMA</div>
<div class="t" style="left:334.0px;top:419.4px;font:24.73px/30px 'Liberation Mono', monospace;color:#d5d5d6">GE=/boot/vmlinuz-5.10.0-28-cloud-amd64 root=/dev/vda ro console=ttyS0 panic=1 reboot=k pci=off nomodules random.trust_cpu=on i8042.noaux net.ifnames=0 biosdevname=0 nvme_core.io_timeout=4294967295 quiet l</div>
<div class="t" style="left:334.0px;top:449.4px;font:24.73px/30px 'Liberation Mono', monospace;color:#d5d5d6">oglevel=1 init=/init\"}".</div>
<div class="t" style="left:11.5px;width:60px;text-align:right;top:489.4px;font:24.73px/30px 'Liberation Mono', monospace;color:#3f3f40">11</div>
<div class="t" style="left:84.0px;top:489.4px;font:24.73px/30px 'Liberation Mono', monospace;color:#5f5f60">08:54:43.841</div>
<div class="b" style="left:274px;top:487.5px;width:48px;height:29.5px;background:#0c3440;border-radius:7px"></div>
<div class="t" style="left:274px;width:48px;text-align:center;top:492.5px;font:400 20.5px/24px 'Liberation Mono', monospace;color:#22d3ee;-webkit-text-stroke:0.5px #22d3ee;transform:scaleY(1.03);transform-origin:50% 19px">VM</div>
<div class="t" style="left:334.0px;top:489.4px;font:24.73px/30px 'Liberation Mono', monospace;color:#d5d5d6">[vm] 2026-03-28T09:54:43.841920820 [anonymous-instance:fc_api] The request was executed successfully. Status code: 204 No Content.</div>
<div class="t" style="left:11.5px;width:60px;text-align:right;top:544.4px;font:24.73px/30px 'Liberation Mono', monospace;color:#3f3f40">12</div>
<div class="t" style="left:84.0px;top:544.4px;font:24.73px/30px 'Liberation Mono', monospace;color:#5f5f60">08:54:43.842</div>
<div class="b" style="left:274px;top:542.5px;width:48px;height:29.5px;background:#0c3440;border-radius:7px"></div>
<div class="t" style="left:274px;width:48px;text-align:center;top:547.5px;font:400 20.5px/24px 'Liberation Mono', monospace;color:#22d3ee;-webkit-text-stroke:0.5px #22d3ee;transform:scaleY(1.03);transform-origin:50% 19px">VM</div>
<div class="t" style="left:334.0px;top:529.4px;font:24.73px/30px 'Liberation Mono', monospace;color:#d5d5d6">[vm] 2026-03-28T09:54:43.842187798 [anonymous-instance:fc_api] The API server received a Put request on "/drives/rootfs" with body "{\"drive_id\":\"rootfs\",\"path_on_host\":\"/tmp/tracecage-overlays/cage</div>
<div class="t" style="left:334.0px;top:559.4px;font:24.73px/30px 'Liberation Mono', monospace;color:#d5d5d6">-51/rootfs.ext4\",\"is_root_device\":true,\"is_read_only\":false}".</div>
<div class="t" style="left:11.5px;width:60px;text-align:right;top:599.4px;font:24.73px/30px 'Liberation Mono', monospace;color:#3f3f40">13</div>
<div class="t" style="left:84.0px;top:599.4px;font:24.73px/30px 'Liberation Mono', monospace;color:#5f5f60">08:54:43.842</div>
<div class="b" style="left:274px;top:597.5px;width:48px;height:29.5px;background:#0c3440;border-radius:7px"></div>
<div class="t" style="left:274px;width:48px;text-align:center;top:602.5px;font:400 20.5px/24px 'Liberation Mono', monospace;color:#22d3ee;-webkit-text-stroke:0.5px #22d3ee;transform:scaleY(1.03);transform-origin:50% 19px">VM</div>
<div class="t" style="left:334.0px;top:599.4px;font:24.73px/30px 'Liberation Mono', monospace;color:#d5d5d6">[vm] 2026-03-28T09:54:43.842296116 [anonymous-instance:fc_api] The request was executed successfully. Status code: 204 No Content.</div>
<div class="t" style="left:11.5px;width:60px;text-align:right;top:639.4px;font:24.73px/30px 'Liberation Mono', monospace;color:#3f3f40">14</div>
<div class="t" style="left:84.0px;top:639.4px;font:24.73px/30px 'Liberation Mono', monospace;color:#5f5f60">08:54:43.842</div>
<div class="b" style="left:274px;top:637.5px;width:48px;height:29.5px;background:#0c3440;border-radius:7px"></div>
<div class="t" style="left:274px;width:48px;text-align:center;top:642.5px;font:400 20.5px/24px 'Liberation Mono', monospace;color:#22d3ee;-webkit-text-stroke:0.5px #22d3ee;transform:scaleY(1.03);transform-origin:50% 19px">VM</div>
<div class="t" style="left:334.0px;top:639.4px;font:24.73px/30px 'Liberation Mono', monospace;color:#d5d5d6">[vm] 2026-03-28T09:54:43.842697910 [anonymous-instance:fc_api] The API server received a Put request on "/vsock" with body "{\"guest_cid\":7,\"uds_path\":\"/tmp/firecracker-51-vsock.sock\"}".</div>
<div class="t" style="left:11.5px;width:60px;text-align:right;top:679.4px;font:24.73px/30px 'Liberation Mono', monospace;color:#3f3f40">15</div>
<div class="t" style="left:84.0px;top:679.4px;font:24.73px/30px 'Liberation Mono', monospace;color:#5f5f60">08:54:43.842</div>
<div class="b" style="left:274px;top:677.5px;width:48px;height:29.5px;background:#0c3440;border-radius:7px"></div>
<div class="t" style="left:274px;width:48px;text-align:center;top:682.5px;font:400 20.5px/24px 'Liberation Mono', monospace;color:#22d3ee;-webkit-text-stroke:0.5px #22d3ee;transform:scaleY(1.03);transform-origin:50% 19px">VM</div>
<div class="t" style="left:334.0px;top:679.4px;font:24.73px/30px 'Liberation Mono', monospace;color:#d5d5d6">[vm] 2026-03-28T09:54:43.842869393 [anonymous-instance:fc_api] The request was executed successfully. Status code: 204 No Content.</div>
<div class="t" style="left:11.5px;width:60px;text-align:right;top:734.4px;font:24.73px/30px 'Liberation Mono', monospace;color:#3f3f40">16</div>
<div class="t" style="left:84.0px;top:734.4px;font:24.73px/30px 'Liberation Mono', monospace;color:#5f5f60">08:54:43.843</div>
<div class="b" style="left:274px;top:732.5px;width:48px;height:29.5px;background:#0c3440;border-radius:7px"></div>
<div class="t" style="left:274px;width:48px;text-align:center;top:737.5px;font:400 20.5px/24px 'Liberation Mono', monospace;color:#22d3ee;-webkit-text-stroke:0.5px #22d3ee;transform:scaleY(1.03);transform-origin:50% 19px">VM</div>
<div class="t" style="left:334.0px;top:719.4px;font:24.73px/30px 'Liberation Mono', monospace;color:#d5d5d6">[vm] 2026-03-28T09:54:43.843213883 [anonymous-instance:fc_api] The API server received a Put request on "/network-interfaces/eth0" with body "{\"iface_id\":\"eth0\",\"guest_mac\":\"02:FC:00:00:00:33\",\"h</div>
<div class="t" style="left:334.0px;top:749.4px;font:24.73px/30px 'Liberation Mono', monospace;color:#d5d5d6">ost_dev_name\":\"tc51\"}".</div>
<div class="t" style="left:11.5px;width:60px;text-align:right;top:804.4px;font:24.73px/30px 'Liberation Mono', monospace;color:#3f3f40">17</div>
<div class="t" style="left:84.0px;top:804.4px;font:24.73px/30px 'Liberation Mono', monospace;color:#5f5f60">08:54:43.843</div>
<div class="b" style="left:274px;top:802.5px;width:48px;height:29.5px;background:#0c3440;border-radius:7px"></div>
<div class="t" style="left:274px;width:48px;text-align:center;top:807.5px;font:400 20.5px/24px 'Liberation Mono', monospace;color:#22d3ee;-webkit-text-stroke:0.5px #22d3ee;transform:scaleY(1.03);transform-origin:50% 19px">VM</div>
<div class="t" style="left:334.0px;top:789.4px;font:24.73px/30px 'Liberation Mono', monospace;color:#d5d5d6">[vm] 2026-03-28T09:54:43.843357525 [anonymous-instance:fc_api] Received Error. Status code: 400 Bad Request. Message: Network config error: Could not create the network device: Open tap device failed: Err</div>
<div class="t" style="left:334.0px;top:819.4px;font:24.73px/30px 'Liberation Mono', monospace;color:#d5d5d6">or while creating ifreq structure: Operation not permitted (os error 1). Invalid TUN/TAP Backend provided by tc51. Check our documentation on setting up the network devices.</div>
<div class="t" style="left:11.5px;width:60px;text-align:right;top:874.4px;font:24.73px/30px 'Liberation Mono', monospace;color:#3f3f40">18</div>
<div class="t" style="left:84.0px;top:874.4px;font:24.73px/30px 'Liberation Mono', monospace;color:#5f5f60">08:54:43.843</div>
<div class="b" style="left:274px;top:872.5px;width:61px;height:29.5px;background:#3a1d5c;border-radius:7px"></div>
<div class="t" style="left:274px;width:61px;text-align:center;top:877.5px;font:400 20.5px/24px 'Liberation Mono', monospace;color:#c485fb;-webkit-text-stroke:0.5px #c485fb;transform:scaleY(1.03);transform-origin:50% 19px">NET</div>
<div class="t" style="left:347.0px;top:859.4px;font:24.73px/30px 'Liberation Mono', monospace;color:#d5d5d6">network config failed, falling back to loopback: network-interfaces failed (400): {"fault_message":"Network config error: Could not create the network device: Open tap device failed: Error while creating</div>
<div class="t" style="left:347.0px;top:889.4px;font:24.73px/30px 'Liberation Mono', monospace;color:#d5d5d6">ifreq structure: Operation not permitted (os error 1). Invalid TUN/TAP Backend provided by tc51. Check our documentation on setting up the network devices."}</div>
<div class="t" style="left:11.5px;width:60px;text-align:right;top:929.4px;font:24.73px/30px 'Liberation Mono', monospace;color:#3f3f40">19</div>
<div class="t" style="left:84.0px;top:929.4px;font:24.73px/30px 'Liberation Mono', monospace;color:#5f5f60">08:54:43.860</div>
<div class="b" style="left:274px;top:927.5px;width:85.5px;height:29.5px;background:#0f3b2b;border-radius:7px"></div>
<div class="t" style="left:274px;width:85.5px;text-align:center;top:932.5px;font:400 20.5px/24px 'Liberation Mono', monospace;color:#34d399;-webkit-text-stroke:0.5px #34d399;transform:scaleY(1.03);transform-origin:50% 19px">VSOCK</div>
<div class="t" style="left:371.5px;top:929.4px;font:24.73px/30px 'Liberation Mono', monospace;color:#d5d5d6">starting event collector on vsock</div>
<div class="t" style="left:11.5px;width:60px;text-align:right;top:969.4px;font:24.73px/30px 'Liberation Mono', monospace;color:#3f3f40">20</div>
<div class="t" style="left:84.0px;top:969.4px;font:24.73px/30px 'Liberation Mono', monospace;color:#5f5f60">08:54:43.861</div>
<div class="b" style="left:274px;top:967.5px;width:73.5px;height:29.5px;background:#262626;border-radius:7px"></div>
<div class="t" style="left:274px;width:73.5px;text-align:center;top:972.5px;font:400 20.5px/24px 'Liberation Mono', monospace;color:#929292;-webkit-text-stroke:0.5px #929292;transform:scaleY(1.03);transform-origin:50% 19px">CAGE</div>
<div class="t" style="left:359.5px;top:969.4px;font:24.73px/30px 'Liberation Mono', monospace;color:#d5d5d6">starting VM</div>
<div class="t" style="left:11.5px;width:60px;text-align:right;top:1009.4px;font:24.73px/30px 'Liberation Mono', monospace;color:#3f3f40">21</div>
<div class="t" style="left:84.0px;top:1009.4px;font:24.73px/30px 'Liberation Mono', monospace;color:#5f5f60">08:54:43.861</div>
<div class="b" style="left:274px;top:1007.5px;width:48px;height:29.5px;background:#0c3440;border-radius:7px"></div>
<div class="t" style="left:274px;width:48px;text-align:center;top:1012.5px;font:400 20.5px/24px 'Liberation Mono', monospace;color:#22d3ee;-webkit-text-stroke:0.5px #22d3ee;transform:scaleY(1.03);transform-origin:50% 19px">VM</div>
<div class="t" style="left:334.0px;top:1009.4px;font:24.73px/30px 'Liberation Mono', monospace;color:#d5d5d6">[vm] 2026-03-28T09:54:43.861826729 [anonymous-instance:fc_api] The API server received a Put request on "/actions" with body "{\"action_type\":\"InstanceStart\"}".</div>
<div class="t" style="left:11.5px;width:60px;text-align:right;top:1049.4px;font:24.73px/30px 'Liberation Mono', monospace;color:#3f3f40">22</div>
<div class="t" style="left:84.0px;top:1049.4px;font:24.73px/30px 'Liberation Mono', monospace;color:#5f5f60">08:54:43.870</div>
<div class="b" style="left:274px;top:1047.5px;width:48px;height:29.5px;background:#0c3440;border-radius:7px"></div>
<div class="t" style="left:274px;width:48px;text-align:center;top:1052.5px;font:400 20.5px/24px 'Liberation Mono', monospace;color:#22d3ee;-webkit-text-stroke:0.5px #22d3ee;transform:scaleY(1.03);transform-origin:50% 19px">VM</div>
<div class="t" style="left:334.0px;top:1049.4px;font:24.73px/30px 'Liberation Mono', monospace;color:#d5d5d6">[vm] 2026-03-28T09:54:43.870677715 [anonymous-instance:main] Artificially kick devices.</div>
<div class="t" style="left:11.5px;width:60px;text-align:right;top:1089.4px;font:24.73px/30px 'Liberation Mono', monospace;color:#3f3f40">23</div>
<div class="t" style="left:84.0px;top:1089.4px;font:24.73px/30px 'Liberation Mono', monospace;color:#5f5f60">08:54:43.870</div>
<div class="b" style="left:274px;top:1087.5px;width:48px;height:29.5px;background:#0c3440;border-radius:7px"></div>
<div class="t" style="left:274px;width:48px;text-align:center;top:1092.5px;font:400 20.5px/24px 'Liberation Mono', monospace;color:#22d3ee;-webkit-text-stroke:0.5px #22d3ee;transform:scaleY(1.03);transform-origin:50% 19px">VM</div>
<div class="t" style="left:334.0px;top:1089.4px;font:24.73px/30px 'Liberation Mono', monospace;color:#d5d5d6">[vm] 2026-03-28T09:54:43.870729810 [anonymous-instance:fc_vcpu 0] Received a VcpuEvent::Resume message with immediate_exit enabled. immediate_exit was disabled before proceeding</div>
<div class="t" style="left:11.5px;width:60px;text-align:right;top:1129.4px;font:24.73px/30px 'Liberation Mono', monospace;color:#3f3f40">24</div>
<div class="t" style="left:84.0px;top:1129.4px;font:24.73px/30px 'Liberation Mono', monospace;color:#5f5f60">08:54:43.871</div>
<div class="b" style="left:274px;top:1127.5px;width:48px;height:29.5px;background:#0c3440;border-radius:7px"></div>
<div class="t" style="left:274px;width:48px;text-align:center;top:1132.5px;font:400 20.5px/24px 'Liberation Mono', monospace;color:#22d3ee;-webkit-text-stroke:0.5px #22d3ee;transform:scaleY(1.03);transform-origin:50% 19px">VM</div>
<div class="t" style="left:334.0px;top:1129.4px;font:24.73px/30px 'Liberation Mono', monospace;color:#d5d5d6">[vm] 2026-03-28T09:54:43.870739878 [anonymous-instance:fc_vcpu 1] Received a VcpuEvent::Resume message with immediate_exit enabled. immediate_exit was disabled before proceeding</div>
<div class="t" style="left:11.5px;width:60px;text-align:right;top:1169.4px;font:24.73px/30px 'Liberation Mono', monospace;color:#3f3f40">25</div>
<div class="t" style="left:84.0px;top:1169.4px;font:24.73px/30px 'Liberation Mono', monospace;color:#5f5f60">08:54:43.871</div>
<div class="b" style="left:274px;top:1167.5px;width:48px;height:29.5px;background:#0c3440;border-radius:7px"></div>
<div class="t" style="left:274px;width:48px;text-align:center;top:1172.5px;font:400 20.5px/24px 'Liberation Mono', monospace;color:#22d3ee;-webkit-text-stroke:0.5px #22d3ee;transform:scaleY(1.03);transform-origin:50% 19px">VM</div>
<div class="t" style="left:334.0px;top:1169.4px;font:24.73px/30px 'Liberation Mono', monospace;color:#d5d5d6">[vm] 2026-03-28T09:54:43.870912484 [anonymous-instance:fc_api] The request was executed successfully. Status code: 204 No Content.</div>
<div class="t" style="left:11.5px;width:60px;text-align:right;top:1209.4px;font:24.73px/30px 'Liberation Mono', monospace;color:#3f3f40">26</div>
<div class="t" style="left:84.0px;top:1209.4px;font:24.73px/30px 'Liberation Mono', monospace;color:#5f5f60">08:54:43.871</div>
<div class="b" style="left:274px;top:1207.5px;width:73.5px;height:29.5px;background:#262626;border-radius:7px"></div>
<div class="t" style="left:274px;width:73.5px;text-align:center;top:1212.5px;font:400 20.5px/24px 'Liberation Mono', monospace;color:#929292;-webkit-text-stroke:0.5px #929292;transform:scaleY(1.03);transform-origin:50% 19px">CAGE</div>
<div class="t" style="left:359.5px;top:1209.4px;font:24.73px/30px 'Liberation Mono', monospace;color:#d5d5d6">VM running (CID 7), detonation started</div>
<div class="t" style="left:11.5px;width:60px;text-align:right;top:1249.4px;font:24.73px/30px 'Liberation Mono', monospace;color:#3f3f40">27</div>
<div class="t" style="left:84.0px;top:1249.4px;font:24.73px/30px 'Liberation Mono', monospace;color:#5f5f60">08:54:45.091</div>
<div class="b" style="left:274px;top:1247.5px;width:48px;height:29.5px;background:#0c3440;border-radius:7px"></div>
<div class="t" style="left:274px;width:48px;text-align:center;top:1252.5px;font:400 20.5px/24px 'Liberation Mono', monospace;color:#22d3ee;-webkit-text-stroke:0.5px #22d3ee;transform:scaleY(1.03);transform-origin:50% 19px">VM</div>
<div class="t" style="left:334.0px;top:1249.4px;font:24.73px/30px 'Liberation Mono', monospace;color:#d5d5d6">[vm] [init] 08:54:45 connected to host via vsock</div>
<div class="t" style="left:11.5px;width:60px;text-align:right;top:1289.4px;font:24.73px/30px 'Liberation Mono', monospace;color:#3f3f40">28</div>
<div class="t" style="left:84.0px;top:1289.4px;font:24.73px/30px 'Liberation Mono', monospace;color:#5f5f60">08:54:45.096</div>
<div class="b" style="left:274px;top:1287.5px;width:48px;height:29.5px;background:#0c3440;border-radius:7px"></div>
<div class="t" style="left:274px;width:48px;text-align:center;top:1292.5px;font:400 20.5px/24px 'Liberation Mono', monospace;color:#22d3ee;-webkit-text-stroke:0.5px #22d3ee;transform:scaleY(1.03);transform-origin:50% 19px">VM</div>
<div class="t" style="left:334.0px;top:1289.4px;font:24.73px/30px 'Liberation Mono', monospace;color:#d5d5d6">[vm] [init] 08:54:45 id 51: artifact=binary source=./data/uploads/b80305a4f29b5da39b40e73759b85b299b694203dbb36f2c43b929f28ab96b8e-data-exfiltrator.sh</div>
<div class="t" style="left:11.5px;width:60px;text-align:right;top:1329.4px;font:24.73px/30px 'Liberation Mono', monospace;color:#3f3f40">29</div>
<div class="t" style="left:84.0px;top:1329.4px;font:24.73px/30px 'Liberation Mono', monospace;color:#5f5f60">08:54:45.101</div>
<div class="b" style="left:274px;top:1327.5px;width:48px;height:29.5px;background:#0c3440;border-radius:7px"></div>
<div class="t" style="left:274px;width:48px;text-align:center;top:1332.5px;font:400 20.5px/24px 'Liberation Mono', monospace;color:#22d3ee;-webkit-text-stroke:0.5px #22d3ee;transform:scaleY(1.03);transform-origin:50% 19px">VM</div>
<div class="t" style="left:334.0px;top:1329.4px;font:24.73px/30px 'Liberation Mono', monospace;color:#d5d5d6">[vm] [accounts-daemon] 08:54:45 planted 17 deception files</div>
<div class="t" style="left:11.5px;width:60px;text-align:right;top:1369.4px;font:24.73px/30px 'Liberation Mono', monospace;color:#3f3f40">30</div>
<div class="t" style="left:84.0px;top:1369.4px;font:24.73px/30px 'Liberation Mono', monospace;color:#5f5f60">08:54:45.105</div>
<div class="b" style="left:274px;top:1367.5px;width:48px;height:29.5px;background:#0c3440;border-radius:7px"></div>
<div class="t" style="left:274px;width:48px;text-align:center;top:1372.5px;font:400 20.5px/24px 'Liberation Mono', monospace;color:#22d3ee;-webkit-text-stroke:0.5px #22d3ee;transform:scaleY(1.03);transform-origin:50% 19px">VM</div>
<div class="t" style="left:334.0px;top:1369.4px;font:24.73px/30px 'Liberation Mono', monospace;color:#d5d5d6">[vm] [accounts-daemon] 08:54:45 running artifact: ./data/uploads/b80305a4f29b5da39b40e73759b85b299b694203dbb36f2c43b929f28ab96b8e-data-exfiltrator.sh (binary)</div>
<div class="t" style="left:11.5px;width:60px;text-align:right;top:1409.4px;font:24.73px/30px 'Liberation Mono', monospace;color:#3f3f40">31</div>
<div class="t" style="left:84.0px;top:1409.4px;font:24.73px/30px 'Liberation Mono', monospace;color:#5f5f60">08:54:45.107</div>
<div class="b" style="left:274px;top:1407.5px;width:48px;height:29.5px;background:#0c3440;border-radius:7px"></div>
<div class="t" style="left:274px;width:48px;text-align:center;top:1412.5px;font:400 20.5px/24px 'Liberation Mono', monospace;color:#22d3ee;-webkit-text-stroke:0.5px #22d3ee;transform:scaleY(1.03);transform-origin:50% 19px">VM</div>
<div class="t" style="left:334.0px;top:1409.4px;font:24.73px/30px 'Liberation Mono', monospace;color:#d5d5d6">[vm] [accounts-daemon] 08:54:45 file monitoring started (fanotify)</div>
<div class="t" style="left:11.5px;width:60px;text-align:right;top:1449.4px;font:24.73px/30px 'Liberation Mono', monospace;color:#3f3f40">32</div>
<div class="t" style="left:84.0px;top:1449.4px;font:24.73px/30px 'Liberation Mono', monospace;color:#5f5f60">08:54:45.109</div>
<div class="b" style="left:274px;top:1447.5px;width:48px;height:29.5px;background:#0c3440;border-radius:7px"></div>
<div class="t" style="left:274px;width:48px;text-align:center;top:1452.5px;font:400 20.5px/24px 'Liberation Mono', monospace;color:#22d3ee;-webkit-text-stroke:0.5px #22d3ee;transform:scaleY(1.03);transform-origin:50% 19px">VM</div>
<div class="t" style="left:334.0px;top:1449.4px;font:24.73px/30px 'Liberation Mono', monospace;color:#d5d5d6">[vm] [accounts-daemon] 08:54:45 shell server listening on vsock port 1025</div>
</div>
</div>
<div class="b" style="left:112px;top:76px;width:4064px;height:2373px;border-radius:54px;box-shadow:inset 0 2px 0 rgba(255,255,255,0.55), inset 0 0 0 1.5px rgba(255,255,255,0.11);pointer-events:none"></div>
</body></html>
